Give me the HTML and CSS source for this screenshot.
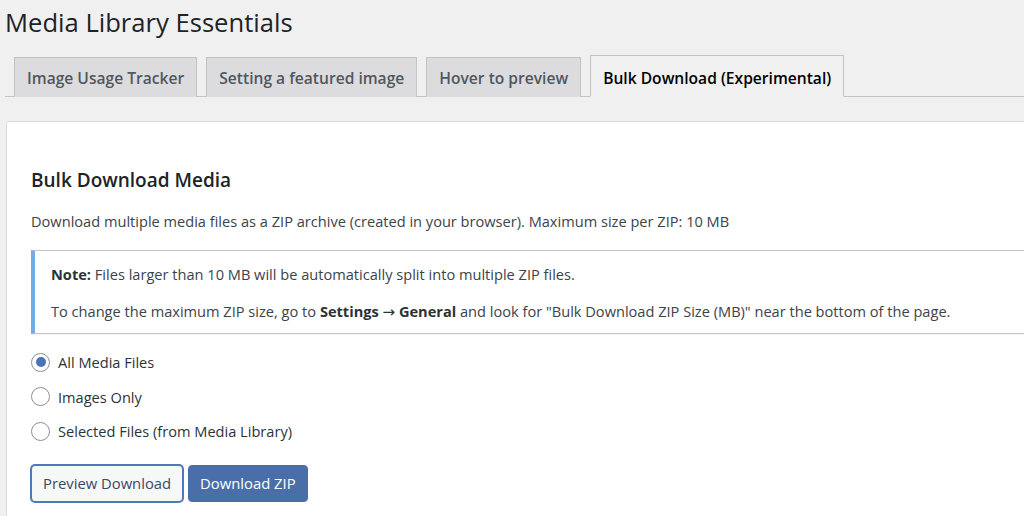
FILE: index.html
```html
<!DOCTYPE html>
<html lang="en">
<head>
    <meta charset="UTF-8">
    <meta name="viewport" content="width=device-width, initial-scale=1.0">
    <title>Media Library Essentials</title>
    <link rel="stylesheet" href="styles.css">
</head>
<body>
    <div class="wrap">
        <h1 class="page-title">Media Library Essentials</h1>

        <!-- Settings tabs -->
        <nav class="nav-tabs">
            <a class="nav-tab" href="#">Image Usage Tracker</a>
            <a class="nav-tab" href="#">Setting a featured image</a>
            <a class="nav-tab" href="#">Hover to preview</a>
            <a class="nav-tab nav-tab-active" href="#">Bulk Download (Experimental)</a>
        </nav>

        <!-- Bulk download panel -->
        <div class="card">
            <h2 class="card-title">Bulk Download Media</h2>
            <p class="desc">Download multiple media files as a ZIP archive (created in your browser). Maximum size per ZIP: 10 MB</p>

            <div class="notice">
                <p><strong>Note:</strong> Files larger than 10 MB will be automatically split into multiple ZIP files.</p>
                <p>To change the maximum ZIP size, go to <strong>Settings <span class="arrow">→</span> General</strong> and look for "Bulk Download ZIP Size (MB)" near the bottom of the page.</p>
            </div>

            <form class="download-form">
                <label class="radio-row">
                    <input type="radio" name="scope" value="all" checked>
                    <span>All Media Files</span>
                </label>
                <label class="radio-row">
                    <input type="radio" name="scope" value="images">
                    <span>Images Only</span>
                </label>
                <label class="radio-row">
                    <input type="radio" name="scope" value="selected">
                    <span>Selected Files (from Media Library)</span>
                </label>

                <div class="actions">
                    <button type="button" class="button button-secondary">Preview Download</button>
                    <button type="button" class="button button-primary">Download ZIP</button>
                </div>
            </form>
        </div>
    </div>
</body>
</html>
```

FILE: styles.css
```css
html,
body {
    margin: 0;
    padding: 0;
    overflow: hidden;
}
body {
    font-family: "Open Sans", "Noto Sans", sans-serif;
    font-size: 14.6px;
    color: #3c434a;
    background-color: #f0f0f1;
}
.wrap {
    padding-left: 5px;
    width: 1200px;
}
.page-title {
    margin: 0;
    padding: 6px 0 0 0;
    font-size: 25.6px;
    font-weight: 400;
    line-height: 34px;
    color: #1d2327;
}
.nav-tabs {
    display: flex;
    align-items: flex-end;
    margin-top: 15px;
    padding-left: 9px;
    border-bottom: 1px solid #c3c4c7;
    height: 41px;
}
.nav-tab {
    display: block;
    height: 40px;
    box-sizing: border-box;
    margin-right: 9px;
    margin-bottom: -1px;
    padding: 0 12px;
    border: 1px solid #c3c4c7;
    border-bottom: none;
    background-color: #dcdcde;
    color: #50575e;
    font-size: 15.6px;
    font-weight: 600;
    line-height: 40px;
    text-decoration: none;
}
.nav-tab-active {
    height: 42px;
    padding-top: 2px;
    background-color: #f0f0f1;
    color: #000;
    border-bottom: 1px solid #f0f0f1;
}
.card {
    margin-top: 24px;
    margin-left: 1px;
    padding: 26px 24px 0 24px;
    background-color: #fff;
    border: 1px solid #dcdcde;
    border-radius: 2px;
    height: 420px;
}
.card-title {
    margin: 18px 0 0 0;
    font-size: 19px;
    font-weight: 600;
    line-height: 28px;
    color: #1d2327;
}
.desc {
    margin: 15px 0 0 0;
    line-height: 24px;
}
.notice {
    margin-top: 17px;
    padding: 0 16px;
    border: 1px solid #c3c4c7;
    border-left: 4px solid #72aee6;
    box-shadow: 0 1px 1px rgba(0, 0, 0, 0.04);
}
.notice p {
    margin: 10px 0 9px 0;
    line-height: 26px;
}
.notice p + p {
    margin-top: 11px;
}
.notice strong {
    color: #2c3338;
}
/* the text font has no arrow glyph */
.arrow {
    font-family: "DejaVu Sans", sans-serif;
    font-size: 15px;
    font-weight: 400;
    line-height: 0;
}
.download-form {
    margin-top: 11px;
}
.radio-row {
    display: flex;
    align-items: center;
    height: 34.5px;
    color: #2c3338;
}
.radio-row input {
    appearance: none;
    margin: 0 8px 0 0;
    width: 19px;
    height: 19px;
    border: 1px solid #8c8f94;
    border-radius: 50%;
    background-color: #fff;
    display: flex;
    align-items: center;
    justify-content: center;
    flex-shrink: 0;
}
.radio-row input:checked::before {
    content: "";
    width: 10px;
    height: 10px;
    border-radius: 50%;
    background-color: #4a72b8;
}
.actions {
    display: flex;
    gap: 5px;
    margin-top: 16px;
    margin-left: -1px;
}
.button {
    height: 37px;
    box-sizing: border-box;
    padding: 0 11px;
    font-family: inherit;
    font-size: 14.8px;
    border-radius: 4px;
    cursor: pointer;
}
.button-secondary {
    background-color: #f6f7f7;
    color: #3a4a66;
    border: 1px solid #4f78b8;
    box-shadow: 0 0 0 1px #4f78b8;
    margin-left: 1px;
}
.button-primary {
    background-color: #4a6fa8;
    color: #fff;
    border: 1px solid #4a6fa8;
}
```
